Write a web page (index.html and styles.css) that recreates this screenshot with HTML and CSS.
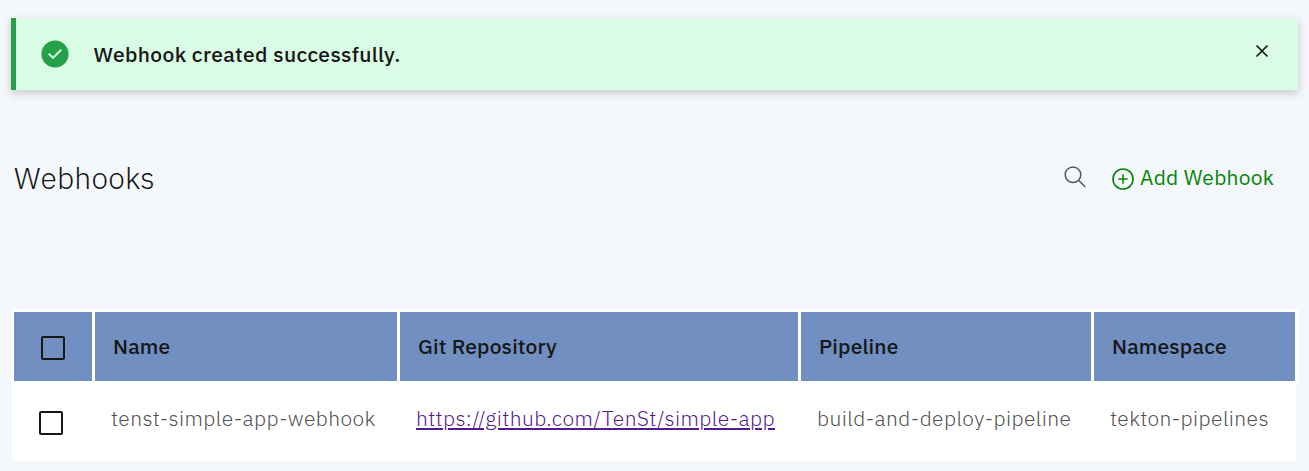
FILE: index.html
```html
<!DOCTYPE html>
<html lang="en">
<head>
<meta charset="utf-8">
<title>Webhooks</title>
<link rel="stylesheet" href="styles.css">
</head>
<body>
<div class="notification">
  <svg class="success-icon" viewBox="0 0 28 28"><circle cx="14" cy="14" r="13.6"/><path d="M7.8 13.8 L12 17.9 L20.2 9.7"/></svg>
  <p class="message">Webhook created successfully.</p>
  <svg class="close-icon" viewBox="0 0 14 14"><path d="M1.5 1.5 L12.5 12.5 M12.5 1.5 L1.5 12.5"/></svg>
</div>
<header class="toolbar">
  <h1 class="title">Webhooks</h1>
  <svg class="search-icon" viewBox="0 0 22 22"><circle cx="9" cy="8.7" r="7.8"/><path d="M14.5 14.2 L21.3 21"/></svg>
  <a class="add"><svg class="add-icon" viewBox="0 0 22 22"><circle cx="11" cy="11" r="10"/><path d="M11 6.3 V15.7 M6.3 11 H15.7"/></svg><span class="add-label">Add Webhook</span></a>
</header>
<main class="table">
  <div class="row head">
    <div class="cell check"><span class="box"></span></div>
    <div class="cell">Name</div>
    <div class="cell">Git Repository</div>
    <div class="cell">Pipeline</div>
    <div class="cell">Namespace</div>
  </div>
  <div class="row body">
    <div class="cell check"><span class="box"></span></div>
    <div class="cell">tenst-simple-app-webhook</div>
    <div class="cell"><a class="link">https://github.com/TenSt/simple-app</a></div>
    <div class="cell">build-and-deploy-pipeline</div>
    <div class="cell">tekton-pipelines</div>
  </div>
</main>
</body>
</html>
```
FILE: styles.css
```css
* { box-sizing: border-box; }
body {
  margin: 0;
  padding: 18px 11px 0;
  height: 471px;
  overflow: hidden;
  background: #f4f7fc;
  color: #171717;
  font: 400 21px/28px "IBM Plex Sans", Roboto, sans-serif;
}
svg { display: block; fill: none; flex: none; }
.notification {
  display: flex;
  height: 72px;
  padding: 0 29px 0 25px;
  border-left: 5px solid #24a148;
  background: #dafbe4;
  box-shadow: 0 3px 9px rgba(0, 0, 0, 0.2);
}
.success-icon { width: 28px; height: 28px; margin-top: 22px; }
.success-icon circle { fill: #24a148; }
.success-icon path { stroke: #dafbe4; stroke-width: 2; }
.message { margin: 22px auto 0 24.5px; font-weight: 500; letter-spacing: 0.37px; white-space: nowrap; }
.close-icon { width: 14px; height: 14px; margin-top: 26px; }
.close-icon path { stroke: #171717; stroke-width: 1.7; }
.toolbar { display: flex; height: 219px; padding: 68px 24px 0 3px; }
.title { margin: 0 auto 0 0; font-size: 30px; line-height: 40px; font-weight: 300; letter-spacing: 0.2px; }
.search-icon { width: 22px; height: 22px; margin: 8px 26px 0 0; stroke: #565656; stroke-width: 1.5; }
.add { display: flex; gap: 6px; padding-top: 5px; color: #088408; white-space: nowrap; }
.add-icon { width: 22px; height: 22px; margin-top: 5px; stroke: #088408; stroke-width: 1.6; }
.add-label { letter-spacing: 0.24px; width: 134px; }
.row { display: grid; white-space: nowrap; }
.head {
  grid-template-columns: 78px 302px 398px 290px 201px;
  gap: 3px;
  height: 75px;
  padding: 3px;
  background: #fff;
  font-weight: 500;
  letter-spacing: 0.16px;
}
.head .cell { background: #718fc1; padding: 20px 0 0 18px; }
.body {
  grid-template-columns: 80px 305px 401px 293px 205px;
  height: 77px;
  margin: 0 2px 0 1px;
  background: #fff;
  color: #505050;
  font-weight: 300;
  letter-spacing: 0.42px;
}
.body .cell { padding: 20px 0 0 19px; }
.head .check { padding: 24px 0 0 27px; }
.body .check { padding: 27px 0 0 27px; }
.box { display: block; width: 24px; height: 24px; border: 2px solid #171717; border-radius: 2px; }
.link { color: #551a8b; text-decoration: underline; text-decoration-thickness: 2px; text-underline-offset: 2px; }
```
